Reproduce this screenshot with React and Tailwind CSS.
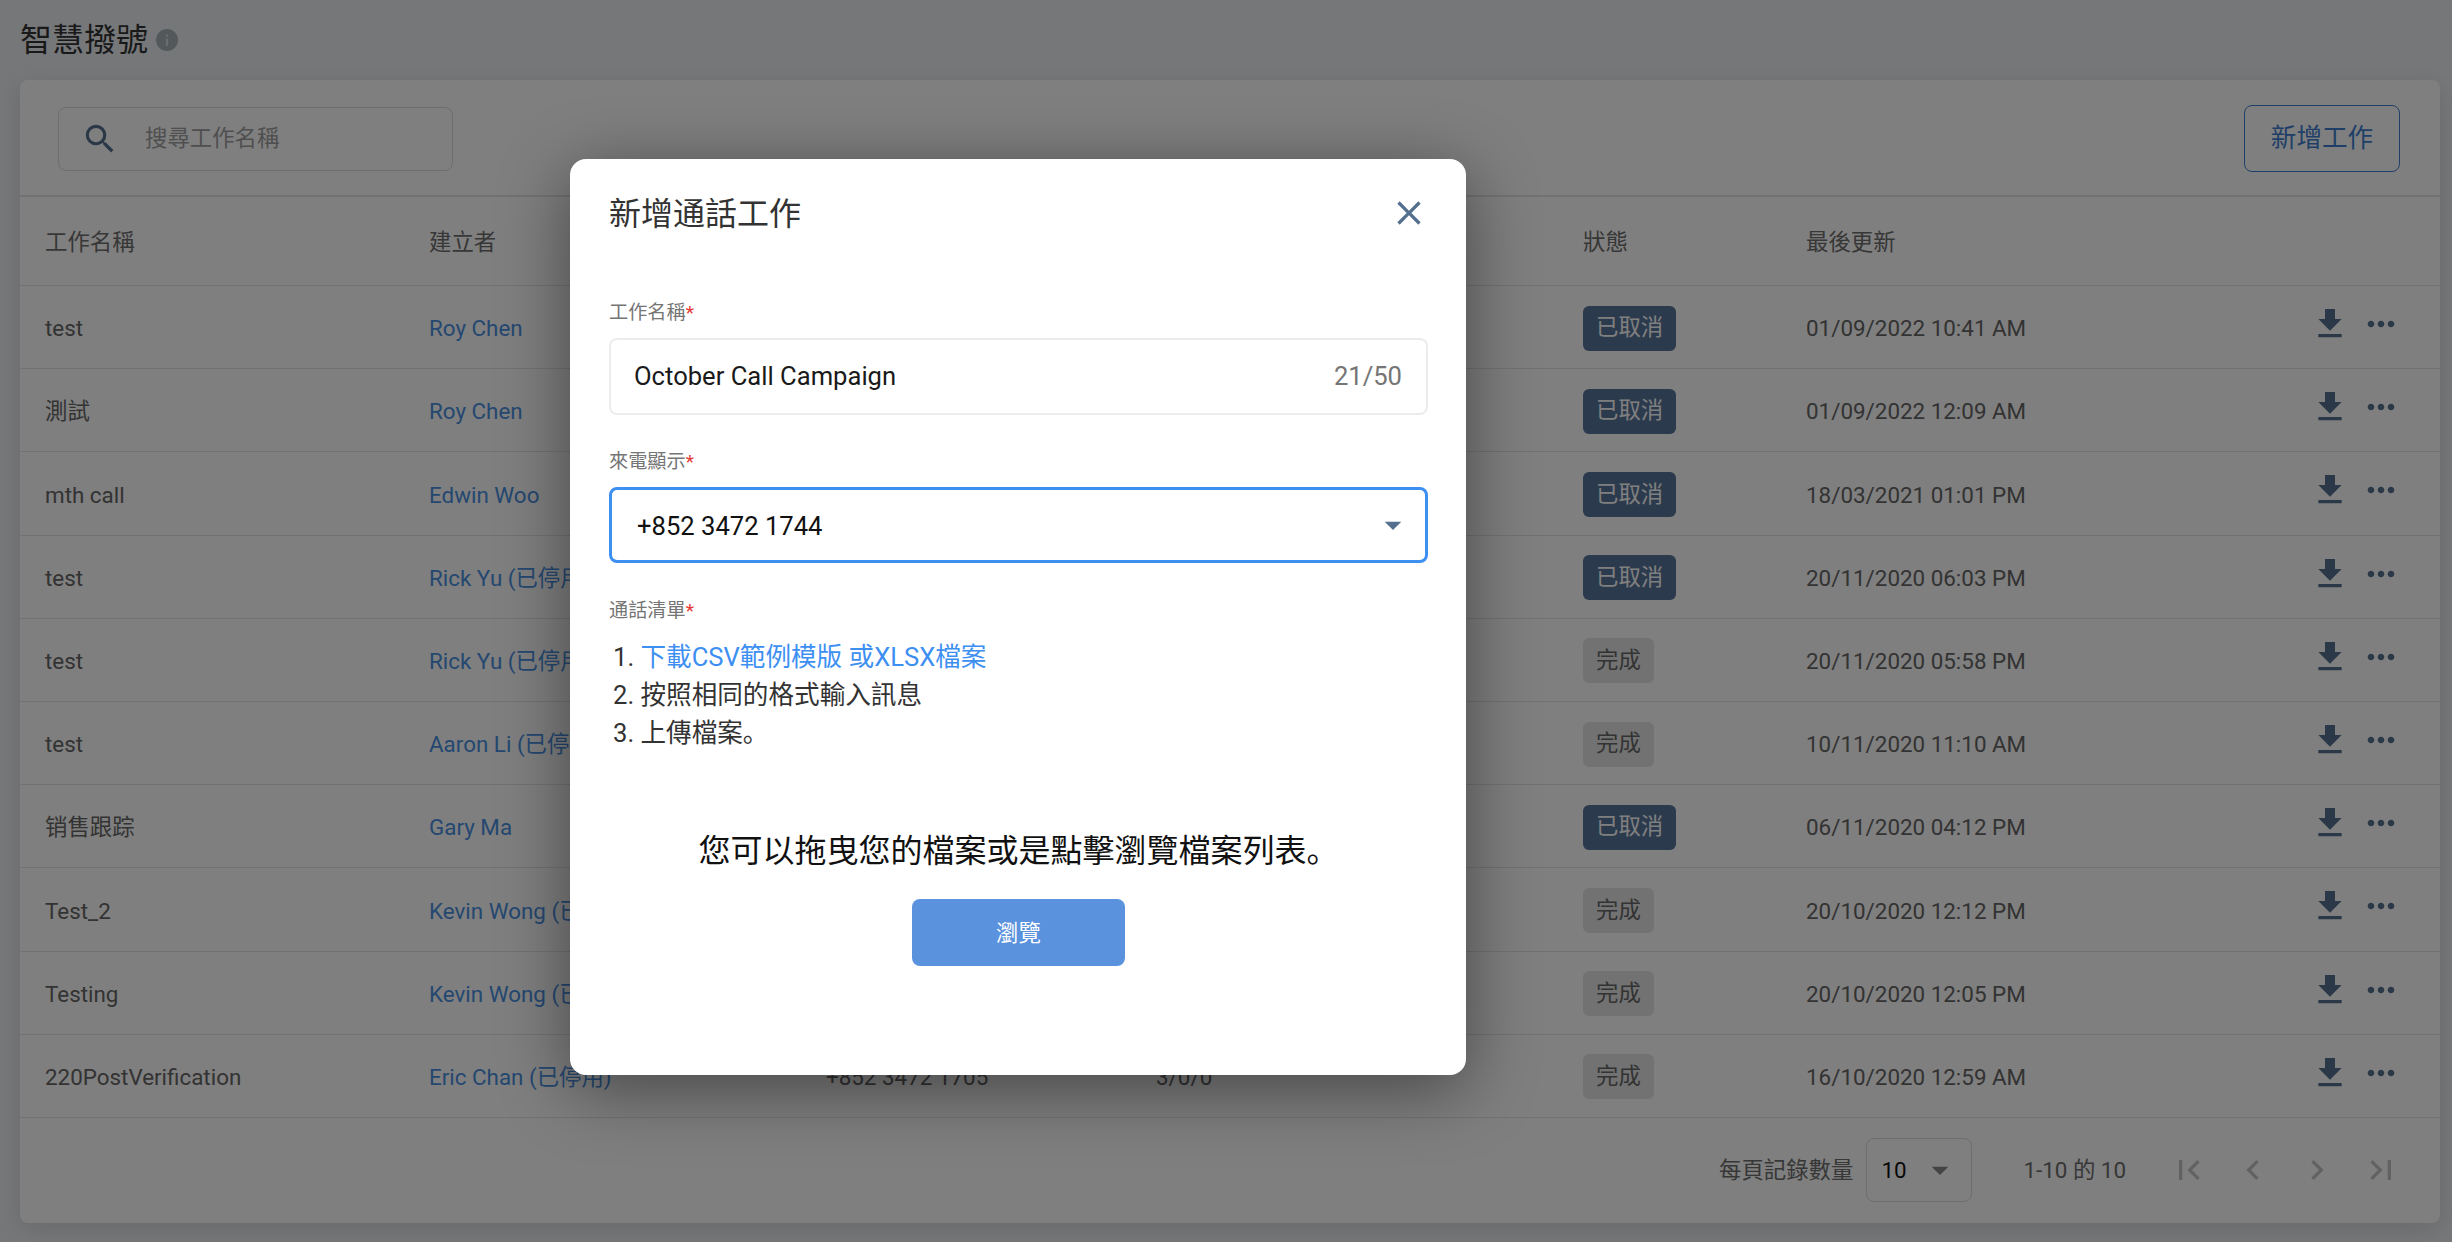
import React from "react";

const rows = [
  { name: "test", owner: "Roy Chen", status: "已取消", updated: "01/09/2022 10:41 AM" },
  { name: "測試", owner: "Roy Chen", status: "已取消", updated: "01/09/2022 12:09 AM" },
  { name: "mth call", owner: "Edwin Woo", status: "已取消", updated: "18/03/2021 01:01 PM" },
  { name: "test", owner: "Rick Yu (已停用)", status: "已取消", updated: "20/11/2020 06:03 PM" },
  { name: "test", owner: "Rick Yu (已停用)", status: "完成", updated: "20/11/2020 05:58 PM" },
  { name: "test", owner: "Aaron Li (已停用)", status: "完成", updated: "10/11/2020 11:10 AM" },
  { name: "销售跟踪", owner: "Gary Ma", status: "已取消", updated: "06/11/2020 04:12 PM" },
  { name: "Test_2", owner: "Kevin Wong (已停用)", status: "完成", updated: "20/10/2020 12:12 PM" },
  { name: "Testing", owner: "Kevin Wong (已停用)", status: "完成", updated: "20/10/2020 12:05 PM" },
  { name: "220PostVerification", owner: "Eric Chan (已停用)", status: "完成", updated: "16/10/2020 12:59 AM" },
];

function Icon({ d, className }) {
  return (
    <svg viewBox="0 0 24 24" fill="currentColor" className={className}>
      <path d={d} />
    </svg>
  );
}

function Label({ children }) {
  return (
    <div className="h-[26px] text-[19.2px] leading-[26px] text-[#757575]">
      {children}
      <span className="text-[#e53935]">*</span>
    </div>
  );
}

export default function App() {
  return (
    <div className="relative h-[1242px] w-full overflow-hidden bg-[#edeff3] font-['Roboto','Noto_Sans_CJK_SC',sans-serif]">
      {/* Page */}
      <div className="flex h-20 items-center pl-5">
        <h1 className="text-[32px] font-normal leading-[48px] text-[#333333]">智慧撥號</h1>
        <svg viewBox="0 0 24 24" className="ml-2 h-[22px] w-[22px]">
          <circle cx="12" cy="12" r="12" fill="#a6b0b5" />
          <rect x="10.8" y="10.5" width="2.4" height="8" fill="#d5dadd" />
          <rect x="10.8" y="6" width="2.4" height="2.6" fill="#d5dadd" />
        </svg>
      </div>

      <div className="ml-5 w-[2420px] rounded-lg bg-white shadow-[0_6px_24px_rgba(0,0,0,0.12)]">
        {/* Toolbar */}
        <div className="flex h-[117px] items-center justify-between border-b-2 border-[#e4e4e4] pl-[38px] pr-[40px] pt-[2px]">
          <div className="flex h-16 w-[395px] items-center rounded-lg border border-[#dddddd] pl-[22px]">
            <Icon
              className="h-[38px] w-[38px] text-[#55708f]"
              d="M15.5 14h-.79l-.28-.27A6.471 6.471 0 0 0 16 9.5 6.5 6.5 0 1 0 9.5 16c1.61 0 3.09-.59 4.23-1.57l.27.28v.79l5 4.99L20.49 19l-4.99-5zm-6 0C7.01 14 5 11.99 5 9.5S7.01 5 9.5 5 14 7.01 14 9.5 11.99 14 9.5 14z"
            />
            <span className="ml-[26px] text-[22.4px] text-[#9e9e9e]">搜尋工作名稱</span>
          </div>
          <button className="h-[67px] w-[156px] rounded-lg border-[1.6px] border-[#3f7fd0] text-[25.6px] text-[#3f7fd0]">
            新增工作
          </button>
        </div>

        {/* Table head */}
        <div className="flex h-[89px] items-center border-b border-[#e4e4e4] pl-[25px] pt-[4px] text-[22.4px] text-[#6e6e6e]">
          <div className="w-[384px]">工作名稱</div>
          <div className="w-[397px]">建立者</div>
          <div className="w-[330px]">來電顯示</div>
          <div className="w-[427px]">進度</div>
          <div className="w-[223px]">狀態</div>
          <div>最後更新</div>
        </div>

        {/* Table rows */}
        {rows.map((row, i) => (
          <div key={i} className="flex h-[83.2px] items-center border-b border-[#e4e4e4] pl-[25px] pt-[4px] text-[22.4px] text-[#666666]">
            <div className="w-[384px] whitespace-nowrap">{row.name}</div>
            <div className="w-[397px] whitespace-nowrap text-[#4a90e2]">{row.owner}</div>
            <div className="w-[330px] whitespace-nowrap">+852 3472 1705</div>
            <div className="w-[427px]">3/0/0</div>
            <div className="-mt-[2px] w-[223px]">
              {row.status === "已取消" ? (
                <span className="inline-flex h-[45px] items-center rounded-md bg-[#57749a] px-[13px] text-white">{row.status}</span>
              ) : (
                <span className="inline-flex h-[45px] items-center rounded-md bg-[#e5e5e5] px-[13px] text-[#666666]">{row.status}</span>
              )}
            </div>
            <div className="w-[504px] whitespace-nowrap">{row.updated}</div>
            <div className="-mt-[10px] flex items-center gap-[11px] text-[#55708f]">
              <Icon className="h-10 w-10" d="M19 9h-4V3H9v6H5l7 7 7-7zM5 18v2h14v-2H5z" />
              <Icon
                className="h-10 w-10"
                d="M6 10c-1.1 0-2 .9-2 2s.9 2 2 2 2-.9 2-2-.9-2-2-2zm12 0c-1.1 0-2 .9-2 2s.9 2 2 2 2-.9 2-2-.9-2-2-2zm-6 0c-1.1 0-2 .9-2 2s.9 2 2 2 2-.9 2-2-.9-2-2-2z"
              />
            </div>
          </div>
        ))}

        {/* Pagination */}
        <div className="flex h-[105px] items-center justify-end pr-[39px] text-[22.4px] text-[#6e6e6e]">
          <span>每頁記錄數量</span>
          <div className="ml-[13px] flex h-16 w-[106px] items-center rounded-lg border border-[#dddddd] pl-[14px]">
            <span className="text-[#111111]">10</span>
            <Icon className="ml-[13px] h-10 w-10 text-[#888888]" d="M7 10l5 5 5-5z" />
          </div>
          <span className="ml-[51px]">1-10 的 10</span>
          <div className="ml-[43px] flex items-center gap-6 text-[#c4c4c4]">
            <Icon className="h-10 w-10" d="M18.41 16.59L13.82 12l4.59-4.59L17 6l-6 6 6 6zM6 6h2v12H6z" />
            <Icon className="h-10 w-10" d="M15.41 7.41L14 6l-6 6 6 6 1.41-1.41L10.83 12z" />
            <Icon className="h-10 w-10" d="M10 6L8.59 7.41 13.17 12l-4.58 4.59L10 18l6-6z" />
            <Icon className="h-10 w-10" d="M5.59 7.41L10.18 12l-4.59 4.59L7 18l6-6-6-6zM16 6h2v12h-2z" />
          </div>
        </div>
      </div>

      {/* Overlay */}
      <div className="absolute inset-0 bg-black/50" />

      {/* Modal */}
      <div className="absolute left-[570px] top-[159px] flex h-[916px] w-[896px] flex-col rounded-2xl bg-white pl-[39px] pr-[38px] pt-[31px] shadow-[0_14px_70px_rgba(0,0,0,0.45)]">
        <div className="flex h-12 items-center justify-between">
          <h2 className="text-[32px] font-normal text-[#333333]">新增通話工作</h2>
          <Icon
            className="-mr-[1px] -mt-[3px] h-10 w-10 text-[#55708f]"
            d="M19 6.41L17.59 5 12 10.59 6.41 5 5 6.41 10.59 12 5 17.59 6.41 19 12 13.41 17.59 19 19 17.59 13.41 12z"
          />
        </div>

        <div className="mt-[62px]">
          <Label>工作名稱</Label>
        </div>
        <div className="mt-[12px] flex h-[77px] items-center justify-between rounded-lg border-2 border-[#ececec] pl-[23px] pr-6 text-[25.6px]">
          <span className="text-[#1a1a1a]">October Call Campaign</span>
          <span className="text-[#757575]">21/50</span>
        </div>

        <div className="mt-[34px]">
          <Label>來電顯示</Label>
        </div>
        <div className="mt-3 flex h-[76px] items-center justify-between rounded-lg border-[3px] border-[#3d8ff2] pl-[25px] pr-[12px] pt-[2px] text-[25.6px] text-[#111111]">
          <span>+852 3472 1744</span>
          <Icon className="-mt-[2px] h-10 w-10 text-[#55708f]" d="M7 10l5 5 5-5z" />
        </div>

        <div className="mt-[35px]">
          <Label>通話清單</Label>
        </div>
        <ol className="ml-[4px] mt-[14px] text-[25.6px] leading-[38px] text-[#333333]">
          <li>
            1. <span className="text-[#3d8ff2]">下載CSV範例模版 或XLSX檔案</span>
          </li>
          <li>2. 按照相同的格式輸入訊息</li>
          <li>3. 上傳檔案。</li>
        </ol>

        <p className="mt-[75px] text-center text-[32px] leading-[48px] text-[#111111]">您可以拖曳您的檔案或是點擊瀏覽檔案列表。</p>
        <button className="mx-auto mt-[24px] h-[67px] w-[213px] rounded-lg bg-[#5b92dd] pt-[2px] text-[22.4px] text-white">瀏覽</button>
      </div>
    </div>
  );
}
